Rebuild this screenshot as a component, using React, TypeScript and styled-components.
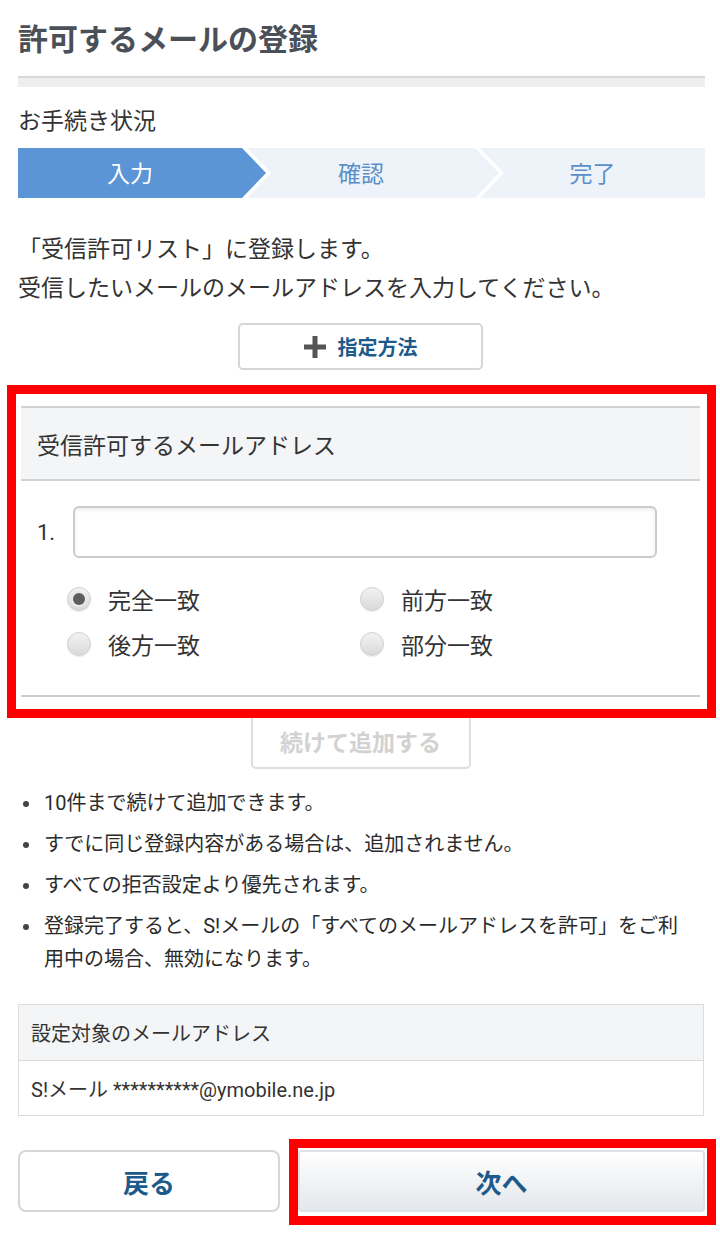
import React from 'react'
import styled, { createGlobalStyle } from 'styled-components'

const GlobalStyle = createGlobalStyle`
  html, body { margin: 0; padding: 0; background: #fff; }
  body {
    font-family: Roboto, "Noto Sans CJK JP", sans-serif;
    color: #333;
    width: 720px;
  }
  * { box-sizing: border-box; }
`

const Page = styled.div`
  padding: 22px 15px 37px 18px;
`

const Title = styled.h1`
  margin: 0;
  font-size: 30px;
  line-height: 36px;
  font-weight: 700;
  color: #4b5058;
`

const Divider = styled.div`
  margin-top: 18px;
  height: 11px;
  border-top: 2px solid #d9d9d9;
  background: #eeeeee;
`

const Label = styled.div`
  margin-top: 19px;
  font-size: 23px;
  line-height: 32px;
`

const Stepper = styled.div`
  display: flex;
  margin-top: 10px;
  height: 50px;
`

const Step = styled.div<{ $w: number; $active?: boolean; $arrow?: boolean; $notch?: boolean; $ml?: number }>`
  flex: 0 0 ${({ $w }) => $w}px;
  margin-left: ${({ $ml }) => $ml || 0}px;
  display: flex;
  align-items: center;
  justify-content: center;
  padding-right: ${({ $arrow }) => ($arrow ? 24 : 0)}px;
  padding-bottom: 3px;
  background: ${({ $active }) => ($active ? '#5b95d6' : '#eef3f9')};
  color: ${({ $active }) => ($active ? '#fff' : '#5b8fcb')};
  font-size: 23px;
  clip-path: ${({ $arrow, $notch }) =>
    $arrow && $notch
      ? 'polygon(0 0, calc(100% - 24px) 0, 100% 50%, calc(100% - 24px) 100%, 0 100%, 24px 50%)'
      : $arrow
      ? 'polygon(0 0, calc(100% - 24px) 0, 100% 50%, calc(100% - 24px) 100%, 0 100%)'
      : 'polygon(0 0, 100% 0, 100% 100%, 0 100%, 24px 50%)'};
`

const Lead = styled.p`
  margin: 32px 0 0;
  font-size: 23px;
  line-height: 39px;
`

const Center = styled.div`
  display: flex;
  justify-content: center;
`

const MethodButton = styled.button`
  margin-top: 15px;
  width: 245px;
  height: 47px;
  display: flex;
  align-items: center;
  justify-content: center;
  gap: 12px;
  background: #fff;
  border: 2px solid #d6d6d6;
  border-radius: 5px;
  font-family: inherit;
  font-size: 20px;
  font-weight: 700;
  color: #1d5a8c;
  padding: 0;
  margin-left: -2px;
`

const FormSection = styled.section`
  position: relative;
  margin: 36px 5px 0 3px;
  border-bottom: 2px solid #cdcdcd;
`

const SectionHead = styled.div`
  height: 75px;
  display: flex;
  align-items: center;
  padding-left: 16px;
  background: #f4f5f7;
  border-top: 2px solid #d2d2d2;
  border-bottom: 2px solid #d2d2d2;
  font-size: 23px;
`

const FormBody = styled.div`
  padding: 25px 43px 29px 16px;
`

const InputRow = styled.div`
  display: flex;
  align-items: center;
  gap: 16px;
`

const Num = styled.span`
  font-size: 22px;
  width: 20px;
`

const TextInput = styled.input`
  flex: 1;
  height: 52px;
  border: 2px solid #cbcbcb;
  border-radius: 6px;
  box-shadow: inset 0 2px 4px rgba(0, 0, 0, 0.07);
  outline: none;
`

const RadioGrid = styled.div`
  display: grid;
  grid-template-columns: 293px 1fr;
  row-gap: 1px;
  margin-top: 19px;
  padding-left: 30px;
`

const RadioItem = styled.label`
  display: flex;
  align-items: center;
  gap: 17px;
  height: 44px;
  font-size: 23px;
  color: #333;
`

const RadioDot = styled.span<{ $checked?: boolean }>`
  position: relative;
  width: 24px;
  height: 24px;
  border-radius: 50%;
  border: 1px solid #cfcfcf;
  background: linear-gradient(#f3f3f3, #d9d9d9);
  box-shadow: 0 1px 1px rgba(0, 0, 0, 0.08);
  flex: 0 0 24px;
  &::after {
    content: '';
    display: ${({ $checked }) => ($checked ? 'block' : 'none')};
    position: absolute;
    left: 5px;
    top: 5px;
    width: 12px;
    height: 12px;
    border-radius: 50%;
    background: #5e5e5e;
    box-shadow: 0 0 0 2px #eaeaea;
  }
`

const Highlight = styled.div<{ $t: number; $r: number; $b: number; $l: number }>`
  position: absolute;
  top: ${({ $t }) => $t}px;
  right: ${({ $r }) => $r}px;
  bottom: ${({ $b }) => $b}px;
  left: ${({ $l }) => $l}px;
  border: 9px solid #ff0000;
  pointer-events: none;
  z-index: 2;
`

const AddButton = styled.button`
  margin-top: 16px;
  width: 220px;
  height: 56px;
  background: #fff;
  border: 2px solid #dedede;
  border-radius: 5px;
  font-family: inherit;
  font-size: 23px;
  font-weight: 700;
  color: #d2d2d2;
  margin-left: -2px;
`

const Notes = styled.ul`
  margin: 18px 0 0;
  padding: 0 14px 0 26px;
  list-style: none;
`

const Note = styled.li`
  position: relative;
  font-size: 20px;
  line-height: 33px;
  margin-bottom: 8px;
  color: #2b2b2b;
  &::before {
    content: '';
    position: absolute;
    left: -21px;
    top: 14px;
    width: 6px;
    height: 6px;
    border-radius: 50%;
    background: #444;
  }
`

const Table = styled.div`
  margin-top: 28px;
  border: 1px solid #dcdcdc;
  margin-right: 1px;
`

const TableHead = styled.div`
  height: 56px;
  display: flex;
  align-items: center;
  padding-left: 12px;
  background: #f4f5f7;
  border-bottom: 1px solid #dcdcdc;
  font-size: 20px;
`

const TableCell = styled.div`
  height: 54px;
  display: flex;
  align-items: center;
  padding-left: 12px;
  font-size: 20px;
`

const Actions = styled.div`
  display: flex;
  gap: 18px;
  margin-top: 34px;
`

const ActionButton = styled.button<{ $primary?: boolean }>`
  height: 62px;
  flex: ${({ $primary }) => ($primary ? '1' : '0 0 262px')};
  position: relative;
  border: 2px solid ${({ $primary }) => ($primary ? '#dfe2e6' : '#d6d6d6')};
  border-radius: ${({ $primary }) => ($primary ? '4px' : '8px')};
  background: ${({ $primary }) => ($primary ? 'linear-gradient(#ffffff, #e4e7ec)' : '#fff')};
  font-family: inherit;
  font-size: 26px;
  font-weight: 700;
  color: #1d5a8c;
  padding: 0;
`

function PlusIcon() {
  return (
    <svg width="22" height="22" viewBox="0 0 22 22">
      <rect x="8.5" y="0" width="5" height="22" fill="#555" />
      <rect x="0" y="8.5" width="22" height="5" fill="#555" />
    </svg>
  )
}

const radios = [
  { label: '完全一致', checked: true },
  { label: '前方一致' },
  { label: '後方一致' },
  { label: '部分一致' },
]

const notes = [
  '10件まで続けて追加できます。',
  'すでに同じ登録内容がある場合は、追加されません。',
  'すべての拒否設定より優先されます。',
  '登録完了すると、S!メールの「すべてのメールアドレスを許可」をご利用中の場合、無効になります。',
]

export default function App() {
  return (
    <Page>
      <GlobalStyle />
      <Title>許可するメールの登録</Title>
      <Divider />
      <Label>お手続き状況</Label>
      <Stepper>
        <Step $w={248} $active $arrow>入力</Step>
        <Step $w={252} $ml={-19} $arrow $notch>確認</Step>
        <Step $w={225} $ml={-19}>完了</Step>
      </Stepper>
      <Lead>
        「受信許可リスト」に登録します。
        <br />
        受信したいメールのメールアドレスを入力してください。
      </Lead>
      <Center>
        <MethodButton>
          <PlusIcon />
          指定方法
        </MethodButton>
      </Center>
      <FormSection>
        <SectionHead>受信許可するメールアドレス</SectionHead>
        <FormBody>
          <InputRow>
            <Num>1.</Num>
            <TextInput type="text" />
          </InputRow>
          <RadioGrid>
            {radios.map((r) => (
              <RadioItem key={r.label}>
                <RadioDot $checked={r.checked} />
                {r.label}
              </RadioItem>
            ))}
          </RadioGrid>
        </FormBody>
        <Highlight $t={-21} $r={-16} $b={-23} $l={-14} />
      </FormSection>
      <Center>
        <AddButton disabled>続けて追加する</AddButton>
      </Center>
      <Notes>
        {notes.map((n) => (
          <Note key={n}>{n}</Note>
        ))}
      </Notes>
      <Table>
        <TableHead>設定対象のメールアドレス</TableHead>
        <TableCell>S!メール **********@ymobile.ne.jp</TableCell>
      </Table>
      <Actions>
        <ActionButton>戻る</ActionButton>
        <ActionButton $primary>
          次へ
          <Highlight $t={-13} $r={-13} $b={-15} $l={-11} />
        </ActionButton>
      </Actions>
    </Page>
  )
}
